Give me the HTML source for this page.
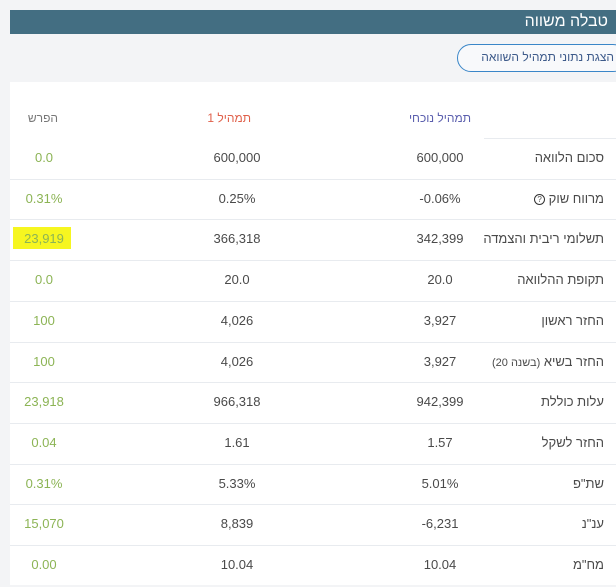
<!DOCTYPE html>
<html><head><meta charset="utf-8"><style>
body{margin:0;width:616px;height:587px;background:#f3f4f6;font-family:"Liberation Sans","Noto Sans CJK SC",sans-serif;overflow:hidden;position:relative;color:#4a4a4a}
.bar{position:absolute;left:10px;top:10px;width:606px;height:24px;background:#436e82;color:#fff;font-size:16px;line-height:24px;text-align:right;box-sizing:border-box;padding-right:8px;direction:rtl}
.btn{position:absolute;left:457px;top:44px;width:170px;height:28px;border:1.5px solid #3a86c8;border-radius:15px;box-sizing:border-box;color:#3d5a8a;font-size:12px;line-height:25px;direction:rtl;padding-right:12px;background:#f8f9fb}
.panel{position:absolute;left:10px;top:82px;width:606px;height:503px;background:#fff}
.t{position:absolute;font-size:13px;white-space:nowrap}
.c{transform:translateX(-50%)}
.r{direction:rtl;text-align:right}
.line{position:absolute;height:1px;background:#e8ebef}
.g{color:#8cb455}
</style></head><body>
<div class="bar">טבלה משווה</div>
<div class="btn">הצגת נתוני תמהיל השוואה</div>
<div class="panel"></div>
<div class="t r" style="right:145px;top:111px;font-size:12px;color:#5b5fae">תמהיל נוכחי</div>
<div class="t r" style="right:365px;top:111px;font-size:12px;color:#e0604a">תמהיל 1</div>
<div class="t r" style="right:558px;top:111px;font-size:12px;color:#777">הפרש</div>
<div class="line" style="left:484px;width:132px;top:138px"></div>
<div id="rows"></div>
<script>
var d=[["סכום הלוואה","600,000","600,000","0.0"],["מרווח שוק <span style='display:inline-block;width:9px;height:9px;border:1.5px solid #333;border-radius:50%;font-size:8px;line-height:9px;text-align:center;vertical-align:middle'>?</span>","-0.06%","0.25%","0.31%"],["תשלומי ריבית והצמדה","342,399","366,318","23,919"],["תקופת ההלוואה","20.0","20.0","0.0"],["החזר ראשון","3,927","4,026","100"],["החזר בשיא <span style='font-size:11px'>(בשנה 20)</span>","3,927","4,026","100"],["עלות כוללת","942,399","966,318","23,918"],["החזר לשקל","1.57","1.61","0.04"],["שת\"פ","5.01%","5.33%","0.31%"],["ענ\"נ","-6,231","8,839","15,070"],["מח\"מ","10.04","10.04","0.00"]];
var h="";
for(var i=0;i<d.length;i++){var y=138+i*40.7;var ty=y+12;
if(i==2)h+='<div style="position:absolute;left:13px;top:'+(y+8)+'px;width:58px;height:22px;background:#f6f620"></div>';
h+='<div class="t r" style="right:12px;top:'+ty+'px">'+d[i][0]+'</div>';
h+='<div class="t c" style="left:440px;top:'+ty+'px">'+d[i][1]+'</div>';
h+='<div class="t c" style="left:237px;top:'+ty+'px">'+d[i][2]+'</div>';
h+='<div class="t c g" style="left:44px;top:'+ty+'px">'+d[i][3]+'</div>';
if(i<d.length-1)h+='<div class="line" style="left:10px;width:606px;top:'+(y+40.7)+'px"></div>';}
document.getElementById("rows").innerHTML=h;
</script>
</body></html>
